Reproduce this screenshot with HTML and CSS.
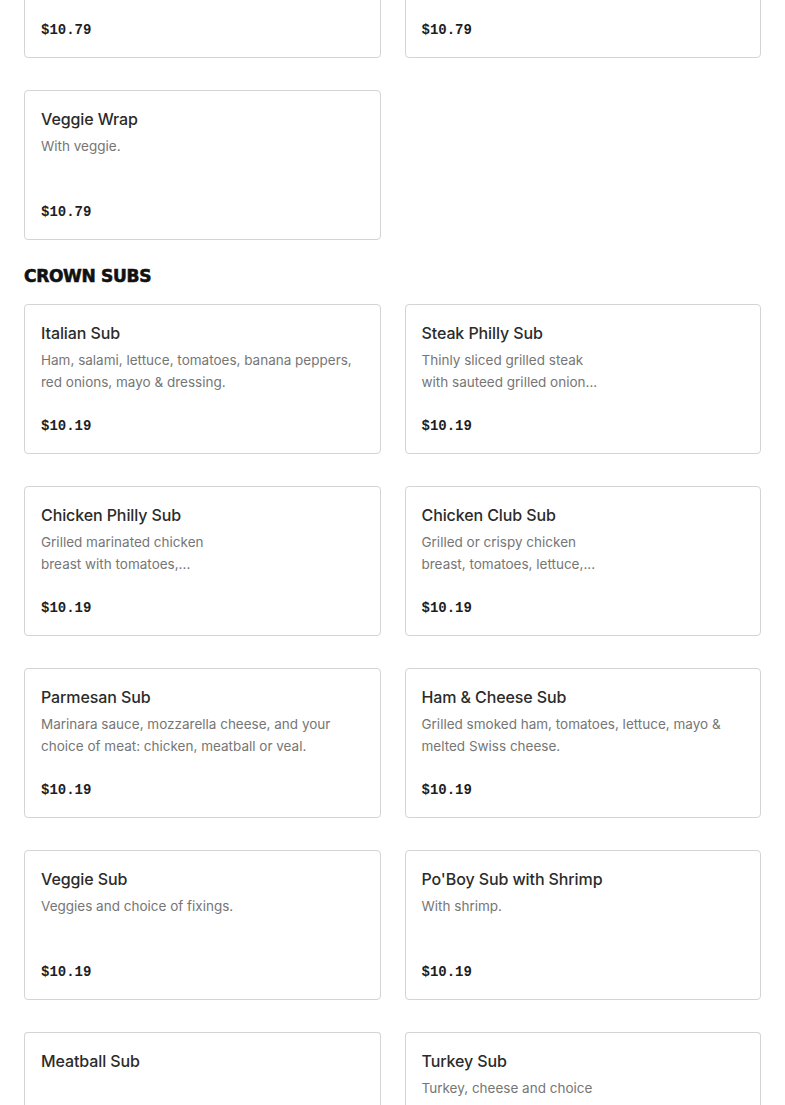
FILE: index.html
```html
<!DOCTYPE html>
<html>
<head>
<meta charset="utf-8">
<link rel="stylesheet" href="styles.css">
</head>
<body>
<div class="page">
  <section class="grid grid-first">
    <div class="card">
      <div class="price">$10.79</div>
    </div>
    <div class="card">
      <div class="price">$10.79</div>
    </div>
    <div class="card">
      <div class="title">Veggie Wrap</div>
      <div class="desc">With veggie.</div>
      <div class="price">$10.79</div>
    </div>
  </section>

  <h2 class="section-title">CROWN SUBS</h2>

  <section class="grid">
    <div class="card">
      <div class="title">Italian Sub</div>
      <div class="desc">Ham, salami, lettuce, tomatoes, banana peppers, red onions, mayo &amp; dressing.</div>
      <div class="price">$10.19</div>
    </div>
    <div class="card">
      <div class="title">Steak Philly Sub</div>
      <div class="desc">Thinly sliced grilled steak<br>with sauteed grilled onion...</div>
      <div class="price">$10.19</div>
    </div>
    <div class="card">
      <div class="title">Chicken Philly Sub</div>
      <div class="desc">Grilled marinated chicken<br>breast with tomatoes,...</div>
      <div class="price">$10.19</div>
    </div>
    <div class="card">
      <div class="title">Chicken Club Sub</div>
      <div class="desc">Grilled or crispy chicken<br>breast, tomatoes, lettuce,...</div>
      <div class="price">$10.19</div>
    </div>
    <div class="card">
      <div class="title">Parmesan Sub</div>
      <div class="desc">Marinara sauce, mozzarella cheese, and your choice of meat: chicken, meatball or veal.</div>
      <div class="price">$10.19</div>
    </div>
    <div class="card">
      <div class="title">Ham &amp; Cheese Sub</div>
      <div class="desc">Grilled smoked ham, tomatoes, lettuce, mayo &amp; melted Swiss cheese.</div>
      <div class="price">$10.19</div>
    </div>
    <div class="card">
      <div class="title">Veggie Sub</div>
      <div class="desc">Veggies and choice of fixings.</div>
      <div class="price">$10.19</div>
    </div>
    <div class="card">
      <div class="title">Po'Boy Sub with Shrimp</div>
      <div class="desc">With shrimp.</div>
      <div class="price">$10.19</div>
    </div>
    <div class="card card-cut">
      <div class="title">Meatball Sub</div>
    </div>
    <div class="card card-cut">
      <div class="title">Turkey Sub</div>
      <div class="desc">Turkey, cheese and choice</div>
    </div>
  </section>
</div>
</body>
</html>
```

FILE: styles.css
```css
html, body {
  margin: 0;
  padding: 0;
  background: #ffffff;
  overflow: hidden;
}
.page {
  padding: 0 24px;
  font-family: "Inter", "Roboto", sans-serif;
}
.grid {
  display: grid;
  grid-template-columns: 1fr 1fr;
  column-gap: 24px;
  row-gap: 32px;
}
.grid-first {
  margin-top: -92px;
}
.card {
  height: 150px;
  box-sizing: border-box;
  border: 1px solid #d4d4d4;
  border-radius: 4px;
  padding: 16px;
  display: flex;
  flex-direction: column;
}
.card-cut {
  height: 73px;
  border-bottom: none;
  border-bottom-left-radius: 0;
  border-bottom-right-radius: 0;
  padding-bottom: 0;
}
.title {
  font-size: 16px;
  font-weight: 500;
  line-height: 24px;
  color: #2b2b2b;
  letter-spacing: -0.1px;
}
.desc {
  margin-top: 4px;
  font-size: 13.5px;
  line-height: 22px;
  color: #767676;
}
.price {
  margin-top: auto;
  font-family: "Liberation Mono", monospace;
  font-weight: 700;
  font-size: 14px;
  line-height: 22px;
  color: #1e1e1e;
}
.section-title {
  margin: 24px 0 16px;
  font-family: "DejaVu Sans", sans-serif;
  font-weight: 900;
  font-size: 17px;
  line-height: 24px;
  color: #111111;
  letter-spacing: -0.3px;
  -webkit-text-stroke: 0.6px #111111;
}
```
